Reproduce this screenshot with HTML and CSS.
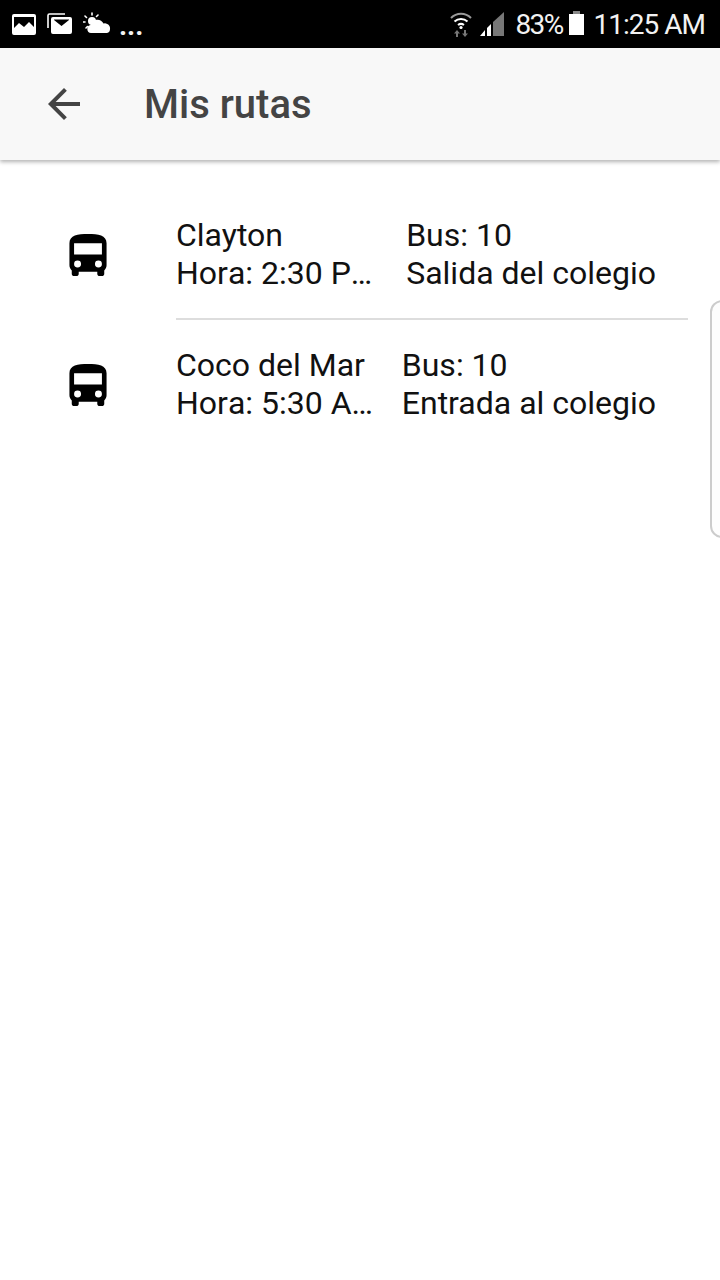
FILE: index.html
```html
<!DOCTYPE html>
<html lang="en">
<head>
    <meta charset="UTF-8">
    <meta name="viewport" content="width=device-width, initial-scale=1.0">
    <title>Mis rutas</title>
    <link rel="stylesheet" href="styles.css">
</head>
<body>
    <div class="status-bar">
        <div class="status-left">
            <svg class="st-icon" width="26" height="24" viewBox="0 0 26 24">
                <path fill="#fff" fill-rule="evenodd" d="M3 2h20a2 2 0 0 1 2 2v17a2 2 0 0 1-2 2H3a2 2 0 0 1-2-2V4a2 2 0 0 1 2-2zm0 3v11l5-5 5 4 5-5 5 5V5z"/>
            </svg>
            <svg class="st-icon" width="26" height="24" viewBox="0 0 26 24">
                <path fill="none" stroke="#fff" stroke-width="1.6" d="M1 16V3.5a1.5 1.5 0 0 1 1.500-1.500H18"/>
                <path fill="#fff" fill-rule="evenodd" d="M6 5h17a2 2 0 0 1 2 2v13a2 2 0 0 1-2 2H6a2 2 0 0 1-2-2V7a2 2 0 0 1 2-2zm1 3l7.500 6L22 8v-.500H7z"/>
            </svg>
            <svg class="st-icon" width="28" height="24" viewBox="0 0 28 24">
                <circle cx="9" cy="9" r="4" fill="#fff"/>
                <path stroke="#fff" stroke-width="1.6" stroke-linecap="round" d="M9 1v2M2 4l1.500 1.500M0 10h2M3 16l1.500-1.500M15 3l-1.500 1.500"/>
                <path fill="#fff" d="M8 21a4 4 0 0 1-.5-7.900 7 7 0 0 1 13-1.500A5 5 0 0 1 27 17a4 4 0 0 1-3 4z"/>
            </svg>
            <span class="dots">...</span>
        </div>
        <div class="status-right">
            <svg class="st-icon" width="24" height="26" viewBox="0 0 24 26">
                <path fill="none" stroke="#9a9a9a" stroke-width="2" d="M2 7a14 14 0 0 1 20 0"/>
                <path fill="none" stroke="#fff" stroke-width="2" d="M5.500 10.500a9.500 9.500 0 0 1 13 0M9 14a5 5 0 0 1 6 0"/>
                <circle cx="12" cy="16.500" r="1.600" fill="#fff"/>
                <path fill="#777" d="M8 19l3 3.500H9V26H7v-3.500H5zM16 26l-3-3.500h2V19h2v3.500h2z"/>
            </svg>
            <svg class="st-icon signal" width="26" height="26" viewBox="0 0 26 26">
                <path fill="#777" d="M25 1v24H14V11z"/>
                <path fill="#fff" d="M12 13v12H8v-8zM6 19v6H1z"/>
            </svg>
            <span class="battery-text">83%</span>
            <div class="battery"></div>
            <span class="clock">11:25 AM</span>
        </div>
    </div>

    <div class="toolbar">
        <svg class="back" width="48" height="48" viewBox="0 0 24 24">
            <path fill="#444" d="M20 11H7.830l5.590-5.590L12 4l-8 8 8 8 1.410-1.410L7.830 13H20v-2z"/>
        </svg>
        <h1 class="title">Mis rutas</h1>
    </div>

    <div class="routes">
        <div class="route">
            <div class="route-icon">
                <svg width="38" height="42" viewBox="4 2 16 18.100">
                    <path fill-rule="evenodd" d="M4 15.500c0 .88.39 1.670 1 2.220v1.480c0 .55.45.9 1 .9h1c.55 0 1-.35 1-.9v-.9h8v.9c0 .55.45.9 1 .9h1c.55 0 1-.35 1-.9v-1.480c.61-.55 1-1.340 1-2.220V6c0-3.500-3.580-4-8-4S4 2.500 4 6zm3.500.9a1.500 1.500 0 1 1 0-3 1.500 1.500 0 0 1 0 3zm9 0a1.500 1.500 0 1 1 0-3 1.500 1.500 0 0 1 0 3zM18 10.800H6V6h12z"/>
                </svg>
            </div>
            <div class="route-body with-line">
                <div class="route-main">
                    <div class="line">Clayton</div>
                    <div class="line no-kern">Hora: 2:30 P…</div>
                </div>
                <div class="route-side">
                    <div class="line">Bus: 10</div>
                    <div class="line">Salida del colegio</div>
                </div>
            </div>
        </div>
        <div class="route">
            <div class="route-icon">
                <svg width="38" height="42" viewBox="4 2 16 18.100">
                    <path fill-rule="evenodd" d="M4 15.500c0 .88.39 1.670 1 2.220v1.480c0 .55.45.9 1 .9h1c.55 0 1-.35 1-.9v-.9h8v.9c0 .55.45.9 1 .9h1c.55 0 1-.35 1-.9v-1.480c.61-.55 1-1.340 1-2.220V6c0-3.500-3.580-4-8-4S4 2.500 4 6zm3.500.9a1.500 1.500 0 1 1 0-3 1.500 1.500 0 0 1 0 3zm9 0a1.500 1.500 0 1 1 0-3 1.500 1.500 0 0 1 0 3zM18 10.800H6V6h12z"/>
                </svg>
            </div>
            <div class="route-body">
                <div class="route-main">
                    <div class="line">Coco del Mar</div>
                    <div class="line no-kern">Hora: 5:30 A…</div>
                </div>
                <div class="route-side">
                    <div class="line">Bus: 10</div>
                    <div class="line">Entrada al colegio</div>
                </div>
            </div>
        </div>
    </div>

    <div class="edge-handle"></div>
</body>
</html>
```

FILE: styles.css
```css
html, body {
    margin: 0;
    padding: 0;
}
body {
    width: 720px;
    height: 1280px;
    overflow: hidden;
    position: relative;
    background: #fff;
    font-family: Roboto, "Liberation Sans", sans-serif;
    color: #111;
}
.status-bar {
    height: 48px;
    background: #000;
    color: #f2f2f2;
    display: flex;
    justify-content: space-between;
    align-items: center;
    padding: 0 15px 0 11px;
}
.status-left, .status-right {
    display: flex;
    align-items: center;
}
.status-left {
    gap: 10px;
}
.st-icon {
    display: block;
    flex: none;
}
.dots {
    font-size: 28px;
    font-weight: 700;
    line-height: 28px;
    margin-left: -2px;
    margin-top: 4px;
}
.status-right {
    font-size: 28px;
}
.signal {
    margin-left: 6px;
}
.battery-text {
    margin-left: 10px;
    letter-spacing: -1.6px;
}
.battery {
    width: 15px;
    height: 21px;
    margin-left: 6px;
    background: #fff;
    position: relative;
}
.battery::before {
    content: "";
    position: absolute;
    top: -3px;
    left: 4px;
    width: 7px;
    height: 3px;
    background: #888;
}
.clock {
    margin-left: 10px;
    letter-spacing: -1px;
}
.toolbar {
    height: 112px;
    background: #f8f8f8;
    box-shadow: 0 2px 4px rgba(0,0,0,0.3);
    display: flex;
    align-items: center;
    padding-left: 40px;
}
.title {
    margin: 0 0 0 56px;
    font-size: 40px;
    font-weight: 500;
    color: #444;
}
.routes {
    padding-top: 30px;
}
.route {
    display: flex;
    height: 130px;
}
.route-icon {
    width: 176px;
    flex: none;
    display: flex;
    justify-content: center;
    align-items: center;
}
.route-body {
    flex: 1;
    min-width: 0;
    display: flex;
    align-items: center;
    margin-right: 32px;
    padding-right: 32px;
    border-bottom: 2px solid transparent;
    box-sizing: border-box;
}
.with-line {
    border-bottom-color: #ddd;
}
.route-main {
    flex: 1;
    min-width: 0;
}
.route-side {
    flex: none;
}
.line {
    font-size: 32px;
    line-height: 38px;
    white-space: nowrap;
}
.no-kern {
    font-kerning: none;
}
.edge-handle {
    position: absolute;
    top: 300px;
    right: -14px;
    width: 20px;
    height: 234px;
    border: 2px solid #ccc;
    border-radius: 14px;
    background: #fdfdfd;
}
```
